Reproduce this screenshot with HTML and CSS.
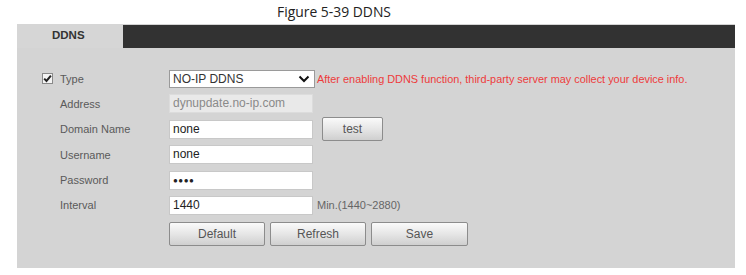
FILE: index.html
```html
<!DOCTYPE html>
<html>
<head>
<meta charset="utf-8">
<link rel="stylesheet" href="styles.css">
</head>
<body>
<div class="caption">Figure 5-39 DDNS</div>
<div class="panel">
  <div class="tabbar">
    <div class="tab">DDNS</div>
    <div class="tabfill"></div>
  </div>
  <div class="form">
    <div class="row">
      <div class="label">
        <span class="check"><svg viewBox="0 0 11 11" width="11" height="11"><path d="M2.2 5.6 L4.5 8 L8.9 2.6" fill="none" stroke="#222" stroke-width="2"/></svg></span>
        <span class="ltext">Type</span>
      </div>
      <div class="select">
        <span>NO-IP DDNS</span>
        <svg class="chev" viewBox="0 0 12 8" width="12" height="8"><path d="M1.5 1.5 L6 6 L10.5 1.5" fill="none" stroke="#111" stroke-width="2"/></svg>
      </div>
      <span class="warn">After enabling DDNS function, third-party server may collect your device info.</span>
    </div>
    <div class="row">
      <div class="label"><span class="ltext pad">Address</span></div>
      <div class="input readonly">dynupdate.no-ip.com</div>
    </div>
    <div class="row">
      <div class="label"><span class="ltext pad">Domain Name</span></div>
      <div class="input">none</div>
      <button class="btn small">test</button>
    </div>
    <div class="row">
      <div class="label"><span class="ltext pad">Username</span></div>
      <div class="input">none</div>
    </div>
    <div class="row">
      <div class="label"><span class="ltext pad">Password</span></div>
      <div class="input dots">&#9679;&#9679;&#9679;&#9679;</div>
    </div>
    <div class="row">
      <div class="label"><span class="ltext pad">Interval</span></div>
      <div class="input">1440</div>
      <span class="hint">Min.(1440~2880)</span>
    </div>
    <div class="buttons">
      <button class="btn">Default</button>
      <button class="btn">Refresh</button>
      <button class="btn wide">Save</button>
    </div>
  </div>
</div>
</body>
</html>
```
FILE: styles.css
```css
html, body {
  margin: 0;
  padding: 0;
  background: #ffffff;
}
body {
  width: 746px;
  height: 275px;
  overflow: hidden;
  font-family: "Liberation Sans", Arial, sans-serif;
}
.caption {
  height: 24px;
  padding-left: 277px;
  font-family: "Open Sans", "Noto Sans", sans-serif;
  font-size: 13.9px;
  line-height: 24px;
  color: #222;
}
.panel {
  margin-left: 17px;
  width: 718px;
  height: 244px;
  background: #d4d4d4;
}
.tabbar {
  display: flex;
  height: 24px;
}
.tab {
  width: 106px;
  background: #d6d6d6;
  font-weight: bold;
  font-size: 11.5px;
  color: #333;
  line-height: 23px;
  padding-left: 35px;
  box-sizing: border-box;
}
.tabfill {
  flex: 1;
  background: #323232;
  margin-top: 1px;
}
.form {
  padding: 21px 0 0 25px;
}
.row {
  display: flex;
  align-items: center;
  height: 19px;
  margin-bottom: 6.4px;
}
.label {
  width: 127px;
  display: flex;
  align-items: center;
  flex-shrink: 0;
}
.check {
  width: 11px;
  height: 11px;
  box-sizing: border-box;
  border: 1px solid #8a8a8a;
  background: #f4f4f4;
  display: flex;
  margin-right: 7px;
  position: relative;
}
.check svg {
  position: absolute;
  left: -1px;
  top: -1px;
}
.ltext {
  font-size: 11px;
  color: #5a5a5a;
}
.ltext.pad {
  padding-left: 18px;
}
.select {
  width: 146px;
  height: 18px;
  box-sizing: border-box;
  border: 1px solid #9a9a9a;
  background: #fff;
  display: flex;
  align-items: center;
  justify-content: space-between;
  padding: 0 3px 0 3px;
  font-size: 12px;
  color: #333;
}
.chev {
  margin-right: 1px;
}
.warn {
  margin-left: 2px;
  font-size: 10.9px;
  color: #ee3b3b;
  white-space: nowrap;
}
.input {
  width: 144px;
  height: 19px;
  box-sizing: border-box;
  border: 1px solid #c8c8c8;
  background: #fff;
  font-size: 12px;
  color: #222;
  line-height: 17px;
  padding-left: 3px;
}
.input.readonly {
  background: #e9e9e9;
  border-color: #dcdcdc;
  color: #8a8a8a;
}
.input.dots {
  font-size: 8px;
  letter-spacing: 0.5px;
}
.hint {
  margin-left: 4px;
  font-size: 11px;
  color: #666;
}
.btn {
  width: 96px;
  height: 24px;
  box-sizing: border-box;
  border: 1px solid #8c8c8c;
  border-radius: 2px;
  background: linear-gradient(#fafafa, #e6e6e6 50%, #cfcfcf);
  font-family: "Liberation Sans", Arial, sans-serif;
  font-size: 12px;
  color: #555;
  padding: 0;
  flex-shrink: 0;
}
.btn.small {
  width: 61px;
  margin-left: 9px;
}
.btn.wide {
  width: 97px;
}
.buttons {
  display: flex;
  gap: 5px;
  margin-top: 6.6px;
  padding-left: 127px;
}
```
